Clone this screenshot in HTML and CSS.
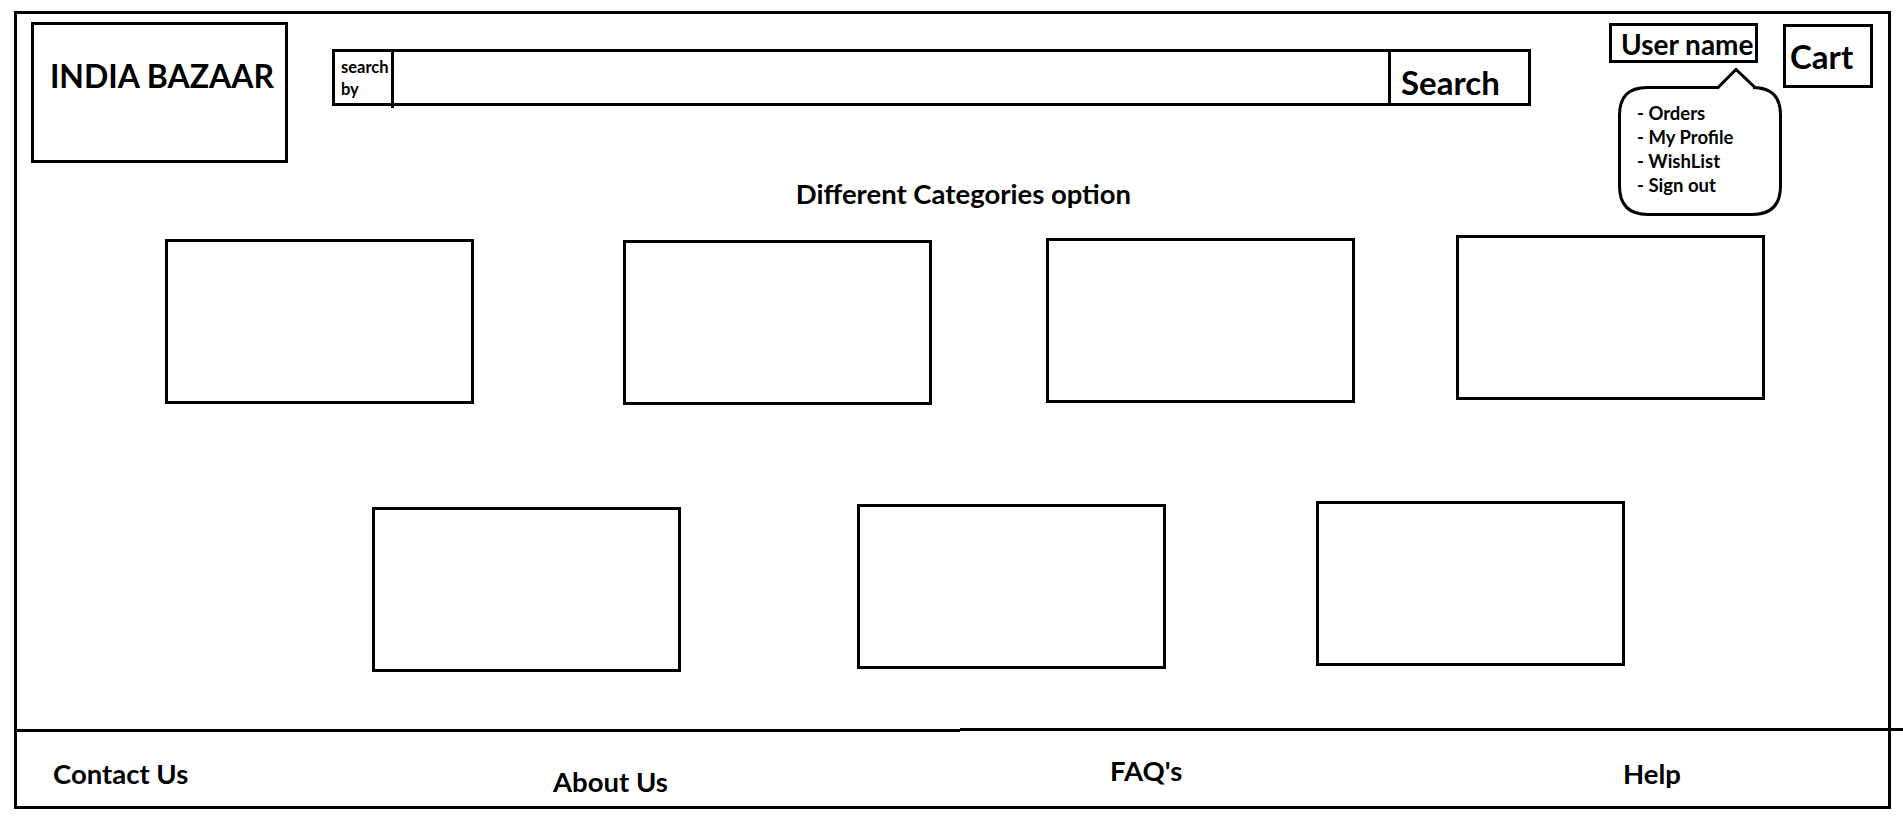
FILE: index.html
```html
<!DOCTYPE html>
<html lang="en">
<head>
  <meta charset="UTF-8" />
  <title>India Bazaar - Wireframe</title>
  <link rel="stylesheet" href="styles.css">
</head>
<body>
  <div class="page">
    <div class="header">
      <div class="logo">INDIA BAZAAR</div>

      <div class="search-bar">
        <div class="search-by">search<br/>by</div>
        <div class="search-input"></div>
        <div class="search-btn">Search</div>
      </div>

      <div class="user">
        User name
        <div class="user-menu">
          <svg class="bubble" width="164" height="148" viewBox="0 0 164 148">
            <path d="M29 19.5 L100 19.5 L118 1.5 L137 19.5 L135 19.5 Q162.5 19.5 162.5 47 L162.5 118 Q162.5 146.5 134 146.5 L30 146.5 Q1.5 146.5 1.5 118 L1.5 47 Q1.5 19.5 29 19.5 Z"
                  fill="#fff" stroke="#000" stroke-width="3" stroke-linejoin="miter" />
          </svg>
          <ul class="menu-list">
            <li>- Orders</li>
            <li>- My Profile</li>
            <li>- WishList</li>
            <li>- Sign out</li>
          </ul>
        </div>
      </div>

      <div class="cart">Cart</div>
    </div>

    <div class="heading">Different Categories option</div>

    <div class="cat-row row-1">
      <div class="cat"></div>
      <div class="cat"></div>
      <div class="cat"></div>
      <div class="cat"></div>
    </div>

    <div class="cat-row row-2">
      <div class="cat"></div>
      <div class="cat"></div>
      <div class="cat"></div>
    </div>

    <div class="footer">
      <div class="foot-link contact">Contact Us</div>
      <div class="foot-link about">About Us</div>
      <div class="foot-link faq">FAQ's</div>
      <div class="foot-link help">Help</div>
    </div>
  </div>
</body>
</html>
```

FILE: styles.css
```css
html, body {
  margin: 0;
  padding: 0;
  background: #fff;
  color: #000;
  font-family: Lato, "Open Sans", sans-serif;
  font-weight: 700;
  overflow: hidden;
}

.page {
  margin: 11px 0 0 14px;
  width: 1877px;
  height: 798px;
  border: 3px solid #000;
  box-sizing: border-box;
  display: flex;
  flex-direction: column;
}

/* header */

.header {
  display: flex;
  align-items: flex-start;
}

.logo {
  flex: none;
  margin: 8px 0 0 14px;
  width: 257px;
  height: 141px;
  border: 3px solid #000;
  box-sizing: border-box;
  padding: 34.5px 0 0 5px;
  text-align: center;
  font-size: 32px;
  line-height: 32px;
}

.search-bar {
  flex: none;
  display: flex;
  margin: 35px 0 0 44px;
  width: 1199px;
  height: 57px;
  border: 3px solid #000;
  box-sizing: border-box;
}

.search-by {
  position: relative;
  flex: none;
  width: 59px;
  border-right: 3px solid #000;
  box-sizing: border-box;
  padding: 4px 0 0 6px;
  font-size: 16.5px;
  line-height: 22px;
}

.search-by::after {
  content: "";
  position: absolute;
  right: -3px;
  bottom: -5px;
  width: 3px;
  height: 5px;
  background: #000;
}

.search-input {
  flex: 1;
}

.search-btn {
  flex: none;
  width: 140px;
  border-left: 3px solid #000;
  box-sizing: border-box;
  padding: 14.3px 0 0 10px;
  font-size: 33px;
  line-height: 33px;
  white-space: nowrap;
}

.user {
  position: relative;
  flex: none;
  margin: 9px 0 0 78px;
  width: 149px;
  height: 40px;
  border: 3px solid #000;
  box-sizing: border-box;
  padding: 4.25px 0 0 9px;
  font-size: 28px;
  line-height: 28px;
  white-space: nowrap;
}

.user-menu {
  position: absolute;
  left: 6px;
  top: 42px;
  width: 164px;
  height: 148px;
  z-index: 5;
}

.bubble {
  position: absolute;
  left: 0;
  top: 0;
}

.menu-list {
  position: relative;
  list-style: none;
  margin: 0;
  padding: 33px 0 0 19px;
  font-size: 18.5px;
  line-height: 24px;
}

.cart {
  flex: none;
  margin: 10px 0 0 25px;
  width: 90px;
  height: 64px;
  border: 3px solid #000;
  box-sizing: border-box;
  padding: 12.5px 0 0 4px;
  font-size: 33px;
  line-height: 33px;
}

/* categories */

.heading {
  margin-top: 17.3px;
  padding-left: 22px;
  text-align: center;
  font-size: 27.5px;
  line-height: 27.5px;
}

.cat-row {
  display: flex;
  align-items: flex-start;
}

.row-1 { margin-top: 26.75px; }
.row-2 { margin-top: 96px; }

.cat {
  flex: none;
  width: 309px;
  height: 165px;
  border: 3px solid #000;
  box-sizing: border-box;
}

.row-1 .cat:nth-child(1) { margin: 4px 0 0 148px; }
.row-1 .cat:nth-child(2) { margin: 5px 0 0 149px; }
.row-1 .cat:nth-child(3) { margin: 3px 0 0 114px; }
.row-1 .cat:nth-child(4) { margin: 0 0 0 101px; }

.row-2 .cat:nth-child(1) { margin: 6px 0 0 355px; }
.row-2 .cat:nth-child(2) { margin: 3px 0 0 176px; }
.row-2 .cat:nth-child(3) { margin: 0 0 0 150px; }

/* footer */

.footer {
  position: relative;
  margin-top: auto;
  height: 78px;
  box-sizing: border-box;
  padding-left: 36px;
  display: grid;
  grid-template-columns: 500px 557px 513px 1fr;
  align-items: start;
}

.footer::before,
.footer::after {
  content: "";
  position: absolute;
  height: 3px;
  background: #000;
}

.footer::before {
  left: 0;
  top: 1px;
  width: 943px;
}

.footer::after {
  left: 943px;
  right: -15px;
  top: 0;
}

.foot-link {
  font-size: 27.5px;
  line-height: 27.5px;
  white-space: nowrap;
}

.contact { margin-top: 32.3px; }
.about { margin-top: 40.3px; }
.faq { margin-top: 29.3px; }
.help { margin-top: 32.3px; }
```
